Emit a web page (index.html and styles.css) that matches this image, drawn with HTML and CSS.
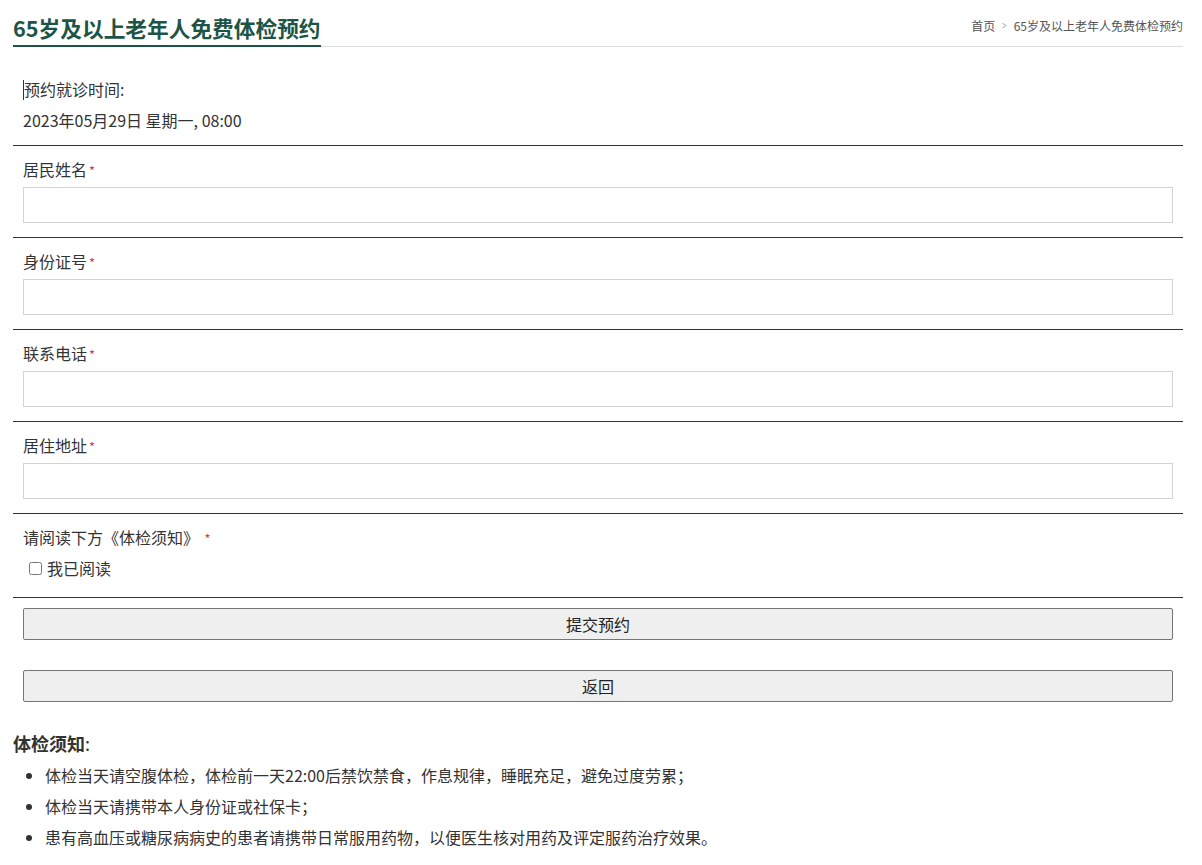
FILE: index.html
```html
<!DOCTYPE html>
<html lang="zh-CN">
<head>
<meta charset="utf-8">
<title>65岁及以上老年人免费体检预约</title>
<link rel="stylesheet" href="styles.css">
</head>
<body>
<div class="page">
  <header class="head">
    <h1 class="title">65岁及以上老年人免费体检预约</h1>
    <nav class="crumb"><span>首页</span><span class="sep">&gt;</span><span>65岁及以上老年人免费体检预约</span></nav>
  </header>

  <form class="form">
    <div class="sec sec-time">
      <div class="label"><span class="caret"></span>预约就诊时间:</div>
      <div class="value">2023年05月29日 星期一, 08:00</div>
    </div>
    <div class="sec">
      <div class="label">居民姓名<span class="req">*</span></div>
      <input class="inp" type="text">
    </div>
    <div class="sec">
      <div class="label">身份证号<span class="req">*</span></div>
      <input class="inp" type="text">
    </div>
    <div class="sec">
      <div class="label">联系电话<span class="req">*</span></div>
      <input class="inp" type="text">
    </div>
    <div class="sec">
      <div class="label">居住地址<span class="req">*</span></div>
      <input class="inp" type="text">
    </div>
    <div class="sec sec-read">
      <div class="label">请阅读下方《体检须知》 <span class="req">*</span></div>
      <label class="check"><input type="checkbox" class="cb">我已阅读</label>
    </div>
    <div class="btns">
      <button type="button" class="btn">提交预约</button>
      <button type="button" class="btn">返回</button>
    </div>
  </form>

  <section class="notice">
    <h2 class="ntitle"><b>体检须知</b>:</h2>
    <ul class="nlist">
      <li>体检当天请空腹体检，体检前一天22:00后禁饮禁食，作息规律，睡眠充足，避免过度劳累；</li>
      <li>体检当天请携带本人身份证或社保卡；</li>
      <li>患有高血压或糖尿病病史的患者请携带日常服用药物，以便医生核对用药及评定服药治疗效果。</li>
    </ul>
  </section>
</div>
</body>
</html>
```

FILE: styles.css
```css
html, body {
  margin: 0;
  padding: 0;
  background: #fff;
}
body {
  font-family: "Noto Sans CJK SC", "Microsoft YaHei", sans-serif;
  color: #333;
  font-size: 16px;
}
.page {
  width: 1170px;
  margin: 0 0 0 13px;
}
.head {
  display: flex;
  justify-content: space-between;
  align-items: flex-end;
  border-bottom: 1px solid #dcdcdc;
  height: 47px;
  box-sizing: border-box;
}
.title {
  margin: 0;
  font-size: 21.7px;
  line-height: 30px;
  font-weight: 700;
  color: #1c5546;
  padding-top: 12px;
  padding-bottom: 2px;
  border-bottom: 2px solid #1c5546;
  margin-bottom: -1px;
}
.crumb {
  font-size: 12px;
  color: #555;
  line-height: 16px;
  align-self: flex-start;
  padding-top: 18px;
  display: flex;
  gap: 5px;
}
.crumb .sep {
  color: #aaa;
  font-family: "DejaVu Sans", sans-serif;
  font-size: 10px;
  transform: scaleX(0.6);
  display: inline-block;
}
.form {
  margin: 0;
}
.sec {
  border-bottom: 1px solid #333;
  padding: 12px 10px 14px;
}
.sec-time {
  padding-top: 31px;
  padding-bottom: 14px;
}
.label {
  height: 22px;
  line-height: 22px;
  font-size: 16px;
}
.value {
  height: 22px;
  line-height: 22px;
  margin-top: 9px;
}
.caret {
  display: inline-block;
  width: 1px;
  height: 20px;
  background: #333;
  vertical-align: -4px;
}
.req {
  color: #e4393c;
  font-size: 13px;
  margin-left: 2px;
  line-height: 0;
}
.inp {
  display: block;
  box-sizing: border-box;
  width: 100%;
  height: 36px;
  margin-top: 7px;
  border: 1px solid #d4d4d4;
  padding: 0 8px;
  font-size: 14px;
  background: #fff;
  outline: none;
}
.sec-read {
  padding-bottom: 18px;
}
.check {
  display: flex;
  align-items: center;
  height: 22px;
  margin-top: 9px;
  line-height: 22px;
  padding-left: 4px;
}
.cb {
  width: 13px;
  height: 13px;
  margin: 0 5px 0 2px;
}
.btns {
  display: flex;
  flex-direction: column;
  gap: 30px;
  padding: 10px 10px 0;
}
.btn {
  box-sizing: border-box;
  width: 100%;
  height: 32px;
  background: #efefef;
  border: 1px solid #767676;
  border-radius: 2px;
  font-family: "Noto Sans CJK SC", sans-serif;
  font-size: 16px;
  color: #222;
  padding: 0;
  line-height: 30px;
}
.notice {
  margin-top: 28px;
}
.ntitle {
  margin: 0;
  font-size: 18px;
  font-weight: 400;
  line-height: 26px;
}
.ntitle b {
  font-weight: 700;
}
.nlist {
  margin: 4px 0 0;
  padding-left: 32px;
}
.nlist li {
  line-height: 31px;
  font-size: 16px;
}
```
